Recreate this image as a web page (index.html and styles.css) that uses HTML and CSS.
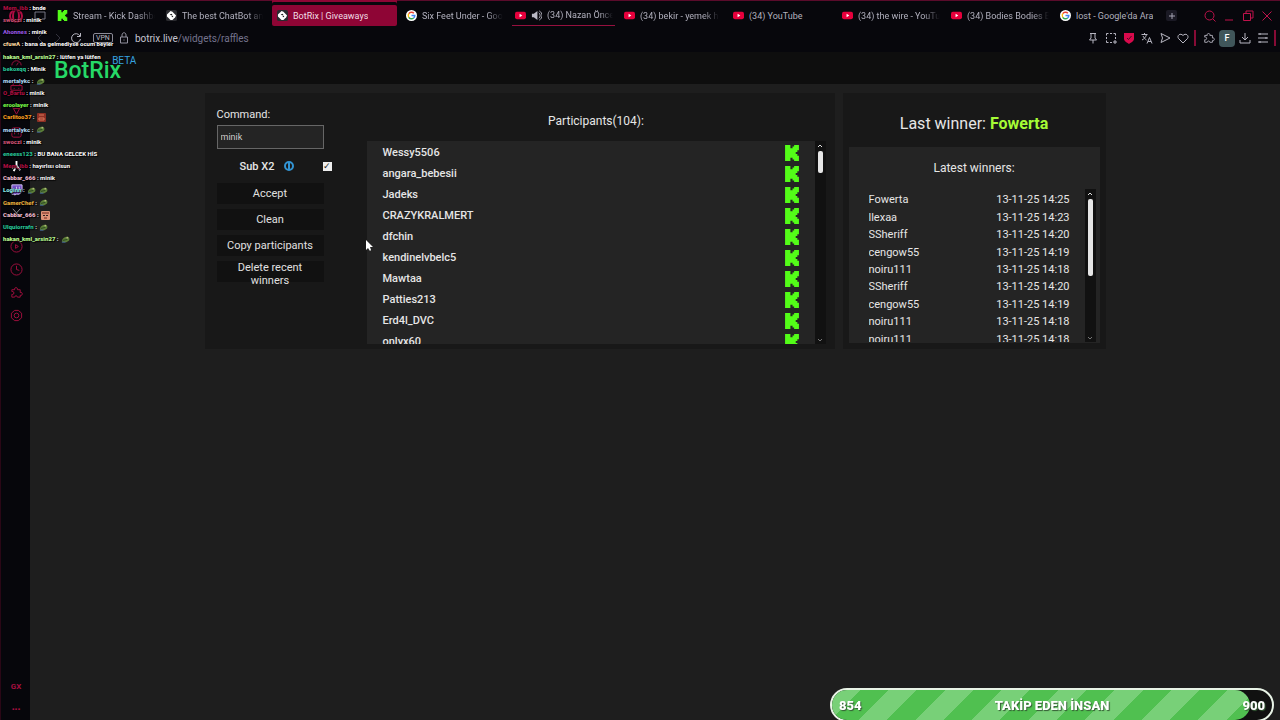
FILE: index.html
```
<!DOCTYPE html>
<html lang="tr">
<head>
  <meta charset="UTF-8">
  <title>BotRix | Giveaways</title>
  <meta name="viewport" content="width=device-width, initial-scale=1.0">
  <link rel="stylesheet" href="styles.css">
</head>
<body>
  <svg class="defs" width="0" height="0">
    <symbol id="kick" viewBox="0 0 13 15"><path fill="#53fc18" d="M0 0h5v3h2V1.500h1.500V0H13v5h-1.500v1.500H10v2h1.500V10H13v5H8.500v-1.500H7V12H5v3H0z"/></symbol>
    <symbol id="botrix" viewBox="0 0 12 12"><rect width="12" height="12" rx="2" fill="#2b2b30"/><path d="M5 1l2 1 4 4-1 2-3 3H5L1 7V5z" fill="#fff"/><path d="M4 5l2-1 1 1-1 1zM6 7l1-1 1 1-1 1z" fill="#222"/></symbol>
    <symbol id="google" viewBox="0 0 12 12"><circle cx="6" cy="6" r="6" fill="#fff"/><g fill="none" stroke-width="1.600"><path d="M8.600 3.500A3.600 3.600 0 0 0 3 4" stroke="#ea4335"/><path d="M3 4a3.600 3.600 0 0 0 0 4" stroke="#fbbc05"/><path d="M3 8a3.600 3.600 0 0 0 5.300.700" stroke="#34a853"/><path d="M8.300 8.700A3.600 3.600 0 0 0 9.600 6H6" stroke="#4285f4"/></g></symbol>
    <symbol id="youtube" viewBox="0 0 12 12"><rect y="2" width="12" height="8" rx="2" fill="#e6003c"/><path d="M5 4.200L8 6 5 7.800z" fill="#fff"/></symbol>
    <symbol id="frog" viewBox="0 0 10 8"><path d="M1 6c0-3 3-5 6-5 2 0 3 2 2 4L6 7H2z" fill="#5c7f37"/><path d="M2 5l5-1" stroke="#24401f"/><path d="M1 7h4" stroke="#4267a3"/><circle cx="7" cy="2" r="1" fill="#b1b77b"/></symbol>
    <symbol id="face" viewBox="0 0 9 9"><rect width="9" height="9" rx="1" fill="#dc9277"/><path d="M1 2h7M3 7h3" stroke="#74271e"/><path d="M2 4h2v1H2zM5 4h2v1H5z" fill="#31201d"/></symbol>
    <symbol id="card" viewBox="0 0 9 9"><rect width="9" height="9" rx="1" fill="#8e3024"/><path d="M2 2h5M2 5h5v2H2z" stroke="#d8785a" fill="none"/></symbol>
    <symbol id="puzzle" viewBox="0 0 14 14"><path d="M2 4h3c-1-3 4-3 3 0h3v3c3-1 3 4 0 3v2H8c0-2-3-2-3 0H2V9c3 1 3-4 0-3z"/></symbol>
  </svg>

  <header class="browser">
    <div class="tabbar">
      <svg class="opera" viewBox="0 0 14 14"><circle cx="7" cy="7" r="6"/><ellipse cx="7" cy="7" rx="3" ry="6"/></svg>
      <svg class="island" viewBox="0 0 12 12"><path d="M1 2h10v7H8L6 11 4 9H1z"/></svg>
      <nav class="tabs">
        <a class="tab" href="#"><svg><use href="#kick"/></svg><span>Stream - Kick Dashbo</span></a>
        <a class="tab" href="#"><svg><use href="#botrix"/></svg><span>The best ChatBot an</span></a>
        <a class="tab active" href="#"><svg><use href="#botrix"/></svg><span>BotRix | Giveaways</span></a>
        <a class="tab" href="#"><svg><use href="#google"/></svg><span>Six Feet Under - Goo</span></a>
        <a class="tab playing" href="#"><svg><use href="#youtube"/></svg><svg viewBox="0 0 12 12"><path d="M1 4h2l4-3v10L3 8H1z" fill="#b9b8c4"/><path d="M8.500 3c2 1 2 5 0 6M9 1c4 2 4 8 0 10" fill="none" stroke="#b9b8c4"/></svg><span>(34) Nazan Önce</span></a>
        <a class="tab" href="#"><svg><use href="#youtube"/></svg><span>(34) bekir - yemek h</span></a>
        <a class="tab" href="#"><svg><use href="#youtube"/></svg><span class="whole">(34) YouTube</span></a>
        <a class="tab" href="#"><svg><use href="#youtube"/></svg><span>(34) the wire - YouTu</span></a>
        <a class="tab" href="#"><svg><use href="#youtube"/></svg><span>(34) Bodies Bodies B</span></a>
        <a class="tab" href="#"><svg><use href="#google"/></svg><span class="whole">lost - Google'da Ara</span></a>
        <button class="new-tab" aria-label="New tab"><svg viewBox="0 0 8 8"><path d="M4 1v6M1 4h6"/></svg></button>
      </nav>
      <div class="window-buttons">
        <button aria-label="Search tabs"><svg viewBox="0 0 12 12"><circle cx="5.500" cy="5.500" r="4.500"/><path d="M9 9l2.500 2.500"/></svg></button>
        <button aria-label="Minimize"><svg viewBox="0 0 12 12"><path d="M2 10h8"/></svg></button>
        <button aria-label="Restore"><svg viewBox="0 0 12 12"><path d="M1.500 3.500h7v7h-7zM4 3V1h7v7H9"/></svg></button>
        <button aria-label="Close"><svg viewBox="0 0 12 12"><path d="M1.500 1.500l9 9M10.500 1.500l-9 9"/></svg></button>
      </div>
    </div>
    <div class="addressbar">
      <button class="faint" aria-label="Back"><svg viewBox="0 0 12 12"><path d="M8 2L4 6l4 4"/></svg></button>
      <button class="faint" aria-label="Forward"><svg viewBox="0 0 12 12"><path d="M4 2l4 4-4 4"/></svg></button>
      <button aria-label="Reload"><svg viewBox="0 0 12 12"><path d="M10 4A4.500 4.500 0 1 0 10.500 7M10.500 1v3.500H7"/></svg></button>
      <span class="vpn">VPN</span>
      <svg class="lock" viewBox="0 0 10 12"><path d="M1.500 5h7v6h-7zM3 5V3c0-3 4-3 4 0v2M5 7.500v1"/></svg>
      <a class="url" href="#">botrix.live<span>/widgets/raffles</span></a>
      <div class="tools">
        <button aria-label="Pin"><svg viewBox="0 0 12 12"><path d="M3 1.500h6M4 2v4L2.500 8h7L8 6V2M6 8v3.500"/></svg></button>
        <button aria-label="Snapshot"><svg viewBox="0 0 12 12"><path d="M1.500 3.500v-2h2M5 1.500h2M8.500 1.500h2v2M10.500 5v2M1.500 5v2M1.500 8.500v2h2M5 10.500h2M10 8v4M8 10h4"/></svg></button>
        <button aria-label="Ad blocker"><svg viewBox="0 0 12 12"><path d="M1 1h10v6c0 2-3.500 4-5 5-1.500-1-5-3-5-5z" class="shield"/><path class="tick" d="M4 6l1.500 1.500L8.500 4"/></svg></button>
        <button aria-label="Translate"><svg viewBox="0 0 12 12"><path d="M.500 2.500h6M3.500 1v1.500M5.500 2.500C5 5 3 7 1 8M2 4c1 2 2 3 3.500 4M6 11.500L8.500 5.500l2.500 6M7 9.500h3"/></svg></button>
        <button aria-label="Send"><svg viewBox="0 0 12 12"><path d="M2 1.500L11 6l-9 4.500L3.500 6z"/></svg></button>
        <button aria-label="Favourite"><svg viewBox="0 0 12 12"><path d="M6 11L1.500 6.500C-.500 3.500 3.500.500 6 3.500c2.500-3 6.500 0 4.500 3z"/></svg></button>
        <i class="divider"></i>
        <button aria-label="Extensions"><svg><use href="#puzzle"/></svg></button>
        <button class="profile">F</button>
        <button aria-label="Downloads"><svg viewBox="0 0 12 12"><path d="M6 1v7M3 5l3 3 3-3M1 8v3h10V8"/></svg></button>
        <button aria-label="Menu"><svg viewBox="0 0 12 12"><path d="M1 2h10M1 6h10M1 10h10M3 1v2M9 5v2M3 9v2"/></svg></button>
        <i class="divider"></i>
      </div>
    </div>
  </header>

  <div class="body">
    <aside class="sidebar">
      <svg viewBox="0 0 14 14"><path d="M2 9a5 5 0 0 1 10 0M7 9l2-3"/></svg>
      <svg viewBox="0 0 14 14"><path d="M3 6l1-3h6l1 3M1 6h12v5H1zM4 9h1M9 9h1"/></svg>
      <svg viewBox="0 0 14 14"><path d="M2 3h10L7 12zM4 6h6"/></svg>
      <svg viewBox="0 0 14 14"><rect x="2" y="2" width="10" height="10" rx="2"/><path d="M5 9V5l2 2 2-2v4"/></svg>
      <svg class="white gap" viewBox="0 0 14 14"><path d="M7 1v5L4 12M7 6l4 5M4 7L2 9"/></svg>
      <svg class="twitch" viewBox="0 0 14 14"><path d="M2 2h11v7l-3 3H7l-2 1v-1H2z"/><path d="M7 4v3M10 4v3"/></svg>
      <svg class="grey" viewBox="0 0 14 14"><path d="M3 3l8 9M11 3l-8 9"/></svg>
      <svg class="gap" viewBox="0 0 14 14"><circle cx="7" cy="7" r="6"/><path d="M6 5l3 2-3 2z"/></svg>
      <svg viewBox="0 0 14 14"><circle cx="7" cy="7" r="6"/><path d="M7 3v4l3 1"/></svg>
      <svg><use href="#puzzle"/></svg>
      <svg viewBox="0 0 14 14"><path d="M5 1.500h4l3.500 3v5l-3.500 3H5l-3.500-3v-5z"/><circle cx="7" cy="7" r="2.500"/></svg>
      <div class="sidebar-foot"><b>GX</b><b>•••</b></div>
    </aside>

    <div class="site">
      <div class="site-header">
        <a class="logo" href="#">BotRix<sup>BETA</sup></a>
      </div>
      <main class="raffle">
        <section class="panel giveaway">
          <form class="controls">
            <label for="command">Command:</label>
            <input type="text" id="command" value="minik">
            <div class="sub">
              <label for="subx2">Sub X2</label>
              <svg viewBox="0 0 10 10"><circle cx="5" cy="5" r="4"/><path d="M5 2v6"/></svg>
              <input type="checkbox" id="subx2" checked>
            </div>
            <button type="button">Accept</button>
            <button type="button">Clean</button>
            <button type="button">Copy participants</button>
            <button type="button" class="two-line">Delete recent winners</button>
          </form>
          <div class="participants">
            <h2>Participants(104):</h2>
            <div class="scroller">
              <ul>
                <li>Wessy5506<svg><use href="#kick"/></svg></li>
                <li>angara_bebesii<svg><use href="#kick"/></svg></li>
                <li>Jadeks<svg><use href="#kick"/></svg></li>
                <li>CRAZYKRALMERT<svg><use href="#kick"/></svg></li>
                <li>dfchin<svg><use href="#kick"/></svg></li>
                <li>kendinelvbelc5<svg><use href="#kick"/></svg></li>
                <li>Mawtaa<svg><use href="#kick"/></svg></li>
                <li>Patties213<svg><use href="#kick"/></svg></li>
                <li>Erd4l_DVC<svg><use href="#kick"/></svg></li>
                <li>onlyx60<svg><use href="#kick"/></svg></li>
              </ul>
              <div class="scrollbar"><svg viewBox="0 0 6 4"><path d="M1 3l2-2 2 2"/></svg><i class="thumb short"></i><svg class="down" viewBox="0 0 6 4"><path d="M1 1l2 2 2-2"/></svg></div>
            </div>
          </div>
        </section>

        <section class="panel winners">
          <h1>Last winner: <b>Fowerta</b></h1>
          <div class="latest">
            <h2>Latest winners:</h2>
            <div class="scroller">
              <div class="clip">
                <table>
                  <tr><td>Fowerta</td><td>13-11-25 14:25</td></tr>
                  <tr><td>llexaa</td><td>13-11-25 14:23</td></tr>
                  <tr><td>SSheriff</td><td>13-11-25 14:20</td></tr>
                  <tr><td>cengow55</td><td>13-11-25 14:19</td></tr>
                  <tr><td>noiru111</td><td>13-11-25 14:18</td></tr>
                  <tr><td>SSheriff</td><td>13-11-25 14:20</td></tr>
                  <tr><td>cengow55</td><td>13-11-25 14:19</td></tr>
                  <tr><td>noiru111</td><td>13-11-25 14:18</td></tr>
                  <tr><td>noiru111</td><td>13-11-25 14:18</td></tr>
                </table>
              </div>
              <div class="scrollbar"><svg viewBox="0 0 6 4"><path d="M1 3l2-2 2 2"/></svg><i class="thumb"></i><svg class="down" viewBox="0 0 6 4"><path d="M1 1l2 2 2-2"/></svg></div>
            </div>
          </div>
        </section>
      </main>
    </div>
  </div>

  <!-- stream overlays -->
  <div class="chat">
    <p><b class="crimson">Mem_ibb</b> : bnde</p>
    <p><b class="rose">swoczi</b> : minik</p>
    <p><b class="violet">Ahonnes</b> : minik</p>
    <p><b class="cream">cfuwA</b> : bana da gelmediyse ocum beyler</p>
    <p><b class="lime">hakan_kml_arsin27</b> : lütfen ya lütfen</p>
    <p><b class="teal">bekoxqq</b> : Minik</p>
    <p><b class="sky">mertalykc</b> : <svg><use href="#frog"/></svg></p>
    <p><b class="crimson">O_Bartu</b> : minik</p>
    <p><b class="green">eroolayer</b> : minik</p>
    <p><b class="orange">Carlitoo37</b> : <svg><use href="#card"/></svg></p>
    <p><b class="sky">mertalykc</b> : <svg><use href="#frog"/></svg></p>
    <p><b class="rose">swoczi</b> : minik</p>
    <p><b class="teal">eneess123</b> : BU BANA GELCEK HİS</p>
    <p><b class="crimson">Mem_ibb</b> : hayırlısı olsun</p>
    <p><b class="pink">Cabbar_666</b> : minik</p>
    <p><b class="aqua">Loginn</b> : <svg><use href="#frog"/></svg> <svg><use href="#frog"/></svg></p>
    <p><b class="gold">GamerChef</b> : <svg><use href="#frog"/></svg></p>
    <p><b class="pink">Cabbar_666</b> : <svg><use href="#face"/></svg></p>
    <p><b class="teal">Ulquiorrafn</b> : <svg><use href="#frog"/></svg></p>
    <p><b class="lime">hakan_kml_arsin27</b> : <svg><use href="#frog"/></svg></p>
  </div>

  <div class="goal">
    <div class="goal-fill"></div>
    <div class="goal-text"><span>854</span><span>TAKİP EDEN İNSAN</span><span>900</span></div>
  </div>

  <svg class="cursor" viewBox="0 0 8 13"><path d="M1 1v10l2-2 2 3 1-1-1-3h3z"/></svg>
</body>
</html>
```
FILE: styles.css
```
* {
  box-sizing: border-box;
}
body {
  margin: 0;
  min-height: 100vh;
  display: flex;
  flex-direction: column;
  overflow: hidden;
  background: #1e1e1e;
  color: #e6e6e6;
  font-family: Roboto, sans-serif;
  font-size: 11px;
}
a {
  color: inherit;
  text-decoration: none;
}
button {
  font-family: inherit;
  border: none;
  padding: 0;
  background: none;
  cursor: pointer;
}
h1, h2, p, ul {
  margin: 0;
  padding: 0;
  font-weight: 400;
}
.defs {
  position: absolute;
}

/* browser chrome */
.browser {
  background: #07070c;
  border-top: 1px solid #5a0b2b;
}
.tabbar {
  height: 27px;
  display: flex;
  align-items: center;
  padding: 2px 7px 0 9px;
}
.opera, .island {
  flex: none;
  fill: none;
}
.opera {
  width: 14px;
  height: 14px;
  stroke: #b00d43;
  stroke-width: 2;
}
.island {
  width: 12px;
  height: 12px;
  margin: 0 8px 0 11px;
  stroke: #777683;
}
.tabs {
  flex: 1;
  min-width: 0;
  display: flex;
  align-items: center;
  gap: 6px;
}
.tab {
  flex: 0 1 103px;
  min-width: 0;
  height: 21px;
  padding: 0 2px 0 3px;
  display: flex;
  align-items: center;
  gap: 5px;
  color: #b2b1be;
  font-size: 9px;
}
.tab svg {
  flex: none;
  width: 11px;
  height: 11px;
}
.tab span {
  overflow: hidden;
  white-space: nowrap;
  mask-image: linear-gradient(to right, #000 80%, transparent);
}
.tab .whole {
  mask-image: none;
}
.tab.active {
  flex-basis: 125px;
  padding-left: 5px;
  border-radius: 2px;
  background: #8e0535;
  box-shadow: 0 -3px #07070c, 0 -6px #8e0535;
  color: #f1dfe6;
}
.tab.active span {
  mask-image: none;
}
.tab.playing {
  border-bottom: 1px solid #96103f;
}
.new-tab {
  flex: none;
  width: 11px;
  height: 11px;
  display: grid;
  place-items: center;
  border-radius: 2px;
  background: #1a1924;
}
.new-tab svg {
  width: 8px;
  height: 8px;
  stroke: #a5a4b3;
}
.window-buttons {
  display: flex;
  gap: 7px;
}
.window-buttons button, .addressbar button {
  width: 12px;
  height: 12px;
  display: grid;
  place-items: center;
}
.window-buttons svg, .addressbar button svg {
  width: 12px;
  height: 12px;
  fill: none;
  stroke: #c0124b;
}
.addressbar {
  height: 24px;
  display: flex;
  align-items: center;
  padding: 0 4px 4px 34px;
}
.addressbar button svg {
  stroke: #b8b7c2;
}
.addressbar > button {
  margin-right: 6px;
}
.addressbar .faint svg {
  stroke: #34333e;
}
.vpn {
  margin: 0 6px 0 5px;
  padding: 0 2px;
  border: 1px solid #8b8a96;
  border-radius: 2px;
  color: #b8b7c2;
  font-size: 7px;
  line-height: 8px;
}
.lock {
  width: 10px;
  height: 12px;
  margin-right: 6px;
  fill: none;
  stroke: #9392a0;
}
.url {
  color: #c5c4d0;
  font-size: 10px;
}
.url span {
  color: #74738c;
}
.tools {
  margin-left: auto;
  display: flex;
  align-items: center;
  gap: 6px;
}
.tools svg .shield {
  fill: #d80a4c;
  stroke: none;
}
.tools svg .tick {
  stroke: #4b0a20;
}
.divider {
  width: 2px;
  height: 16px;
  margin: 0 1px 0 -1px;
  background: #870b36;
}
.divider:last-child {
  margin: 0 0 0 -1px;
}
.addressbar .profile {
  width: 16px;
  height: 17px;
  margin: 0 -2px;
  border-radius: 4px;
  background: #40565a;
  color: #fff;
  font-size: 9px;
  font-weight: 500;
}

.body {
  flex: 1;
  display: flex;
}
.sidebar {
  width: 30px;
  padding: 5px 0 6px 1px;
  border-left: 1px solid #2a0716;
  display: flex;
  flex-direction: column;
  align-items: center;
  gap: 10px;
  background: #06060b;
}
.sidebar svg {
  width: 13px;
  height: 13px;
  flex: none;
  fill: none;
  stroke: #a60f40;
}
.sidebar .gap {
  margin-top: 11px;
}
.sidebar .white {
  stroke: #fff;
  stroke-width: 2;
}
.sidebar .twitch {
  fill: #7650c9;
  stroke: #d6c8f4;
}
.sidebar .grey {
  stroke: #999;
}
.sidebar-foot {
  margin-top: auto;
  display: flex;
  flex-direction: column;
  align-items: center;
  gap: 14px;
  color: #a60f40;
  font-size: 8px;
  line-height: 9px;
}

/* botrix page */
.site {
  flex: 1;
  min-width: 0;
}
.site-header {
  height: 32px;
  padding-left: 24px;
  background: #0e0e0e;
}
.logo {
  display: flex;
  color: #26d967;
  font-size: 23px;
  font-weight: 500;
  line-height: 38px;
}
.logo sup {
  margin-left: -9px;
  color: #36a3e0;
  font-size: 10px;
  font-weight: 400;
  line-height: 18px;
}
.raffle {
  width: 100%;
  max-width: 901px;
  margin: 9px auto 0;
  display: grid;
  grid-template-columns: 630fr 263fr;
  gap: 8px;
}
.panel {
  background: #181818;
}
.giveaway {
  display: flex;
  gap: 43px;
  padding: 14px 9px 5px 12px;
}
.controls {
  width: 107px;
  display: flex;
  flex-direction: column;
  gap: 5px;
}
.controls > label {
  line-height: 16px;
  margin-bottom: -3px;
}
.controls input[type="text"] {
  width: 100%;
  height: 24px;
  padding: 0 3px;
  border: 1px solid #666;
  background: #242424;
  color: #ccc;
  font-family: inherit;
  font-size: 9px;
}
.sub {
  height: 24px;
  display: flex;
  align-items: center;
  margin-right: -9px;
  padding-left: 23px;
  font-weight: 500;
}
.sub svg {
  width: 10px;
  height: 10px;
  margin-left: 10px;
  fill: none;
  stroke: #3294d3;
  stroke-width: 2;
}
.sub input {
  appearance: none;
  width: 9px;
  height: 9px;
  margin: 0 1px 0 auto;
  background: #eee;
}
.sub input:checked::before {
  content: "✓";
  display: block;
  color: #222;
  font-size: 9px;
  line-height: 9px;
  text-align: center;
}
.controls button {
  height: 21px;
  background: #111;
  color: #e0e0e0;
  font-size: 11px;
  line-height: 13px;
}
.controls .two-line {
  padding: 0 20px;
}
.participants {
  flex: 1;
}
.participants h2 {
  height: 34px;
  padding-top: 5px;
  font-size: 12px;
  line-height: 18px;
  text-align: center;
}
.scroller {
  display: flex;
}
.participants .scroller {
  height: 203px;
}
.participants ul {
  flex: 1;
  overflow: hidden;
  padding: 1px 16px;
  background: #242424;
  list-style: none;
}
.participants li {
  height: 21px;
  display: flex;
  align-items: center;
  justify-content: space-between;
  font-weight: 500;
}
.participants li svg {
  width: 14px;
  height: 16px;
}
.scrollbar {
  width: 11px;
  padding: 3px 0 2px;
  display: flex;
  flex-direction: column;
  align-items: center;
  gap: 3px;
  background: #111;
}
.scrollbar svg {
  width: 6px;
  height: 4px;
  fill: none;
  stroke: #ddd;
}
.scrollbar .down {
  margin-top: auto;
  stroke: #777;
}
.thumb {
  width: 5px;
  height: 77px;
  border-radius: 2px;
  background: #e6e6e6;
}
.thumb.short {
  height: 22px;
}
.winners {
  padding: 21px 6px 6px;
}
.winners h1 {
  margin-bottom: 13px;
  font-size: 16px;
  line-height: 20px;
  text-align: center;
}
.winners h1 b {
  color: #a5fb35;
}
.latest {
  padding: 13px 4px 1px 20px;
  background: #242424;
}
.latest h2 {
  margin: 0 16px 12px 0;
  font-size: 12px;
  line-height: 17px;
  text-align: center;
}
.latest .scroller {
  height: 153px;
  gap: 15px;
}
.clip {
  flex: 1;
  padding-top: 2px;
  overflow: hidden;
}
.clip table {
  width: 100%;
  height: 157px;
  border-collapse: collapse;
}
.clip td {
  padding: 0;
}
.clip td:last-child {
  text-align: right;
}

/* overlays */
.chat {
  position: absolute;
  top: 2px;
  left: 3px;
  height: 243px;
  display: flex;
  flex-direction: column;
  justify-content: space-between;
  color: #fff;
  font-size: 6px;
  font-weight: 700;
  line-height: 12px;
  text-shadow: 0 0 1px #000, 1px 1px 1px #000;
}
.chat p {
  height: 12px;
  font-weight: 700;
  white-space: nowrap;
}
.chat svg {
  width: 9px;
  height: 9px;
  margin-left: 1px;
  vertical-align: middle;
}
.crimson { color: #a80f40; }
.rose { color: #c84f72; }
.violet { color: #8f52dc; }
.cream { color: #f3cf9c; }
.lime { color: #b7f58f; }
.teal { color: #27bd91; }
.sky { color: #a6cdea; }
.green { color: #70ef45; }
.orange { color: #f09a20; }
.pink { color: #eab9cb; }
.aqua { color: #8be4e0; }
.gold { color: #e0a83c; }

.goal {
  position: fixed;
  right: 6px;
  bottom: -2px;
  width: 444px;
  height: 34px;
  overflow: hidden;
  border: 2px solid #e8f3e6;
  border-radius: 17px;
  background: #111;
}
.goal-fill {
  width: 95%;
  height: 100%;
  border-radius: 0 15px 15px 0;
  background: repeating-linear-gradient(135deg, #78d078 0 20px, #50c050 20px 40px);
}
.goal-text {
  position: absolute;
  inset: 0;
  display: flex;
  align-items: center;
  justify-content: space-between;
  padding: 0 7px;
  color: #fff;
  font-size: 13px;
  font-weight: 900;
  text-shadow: 1px 1px 1px #355b35;
}
.cursor {
  position: absolute;
  top: 239px;
  left: 365px;
  width: 8px;
  height: 13px;
  fill: #fff;
}
```
